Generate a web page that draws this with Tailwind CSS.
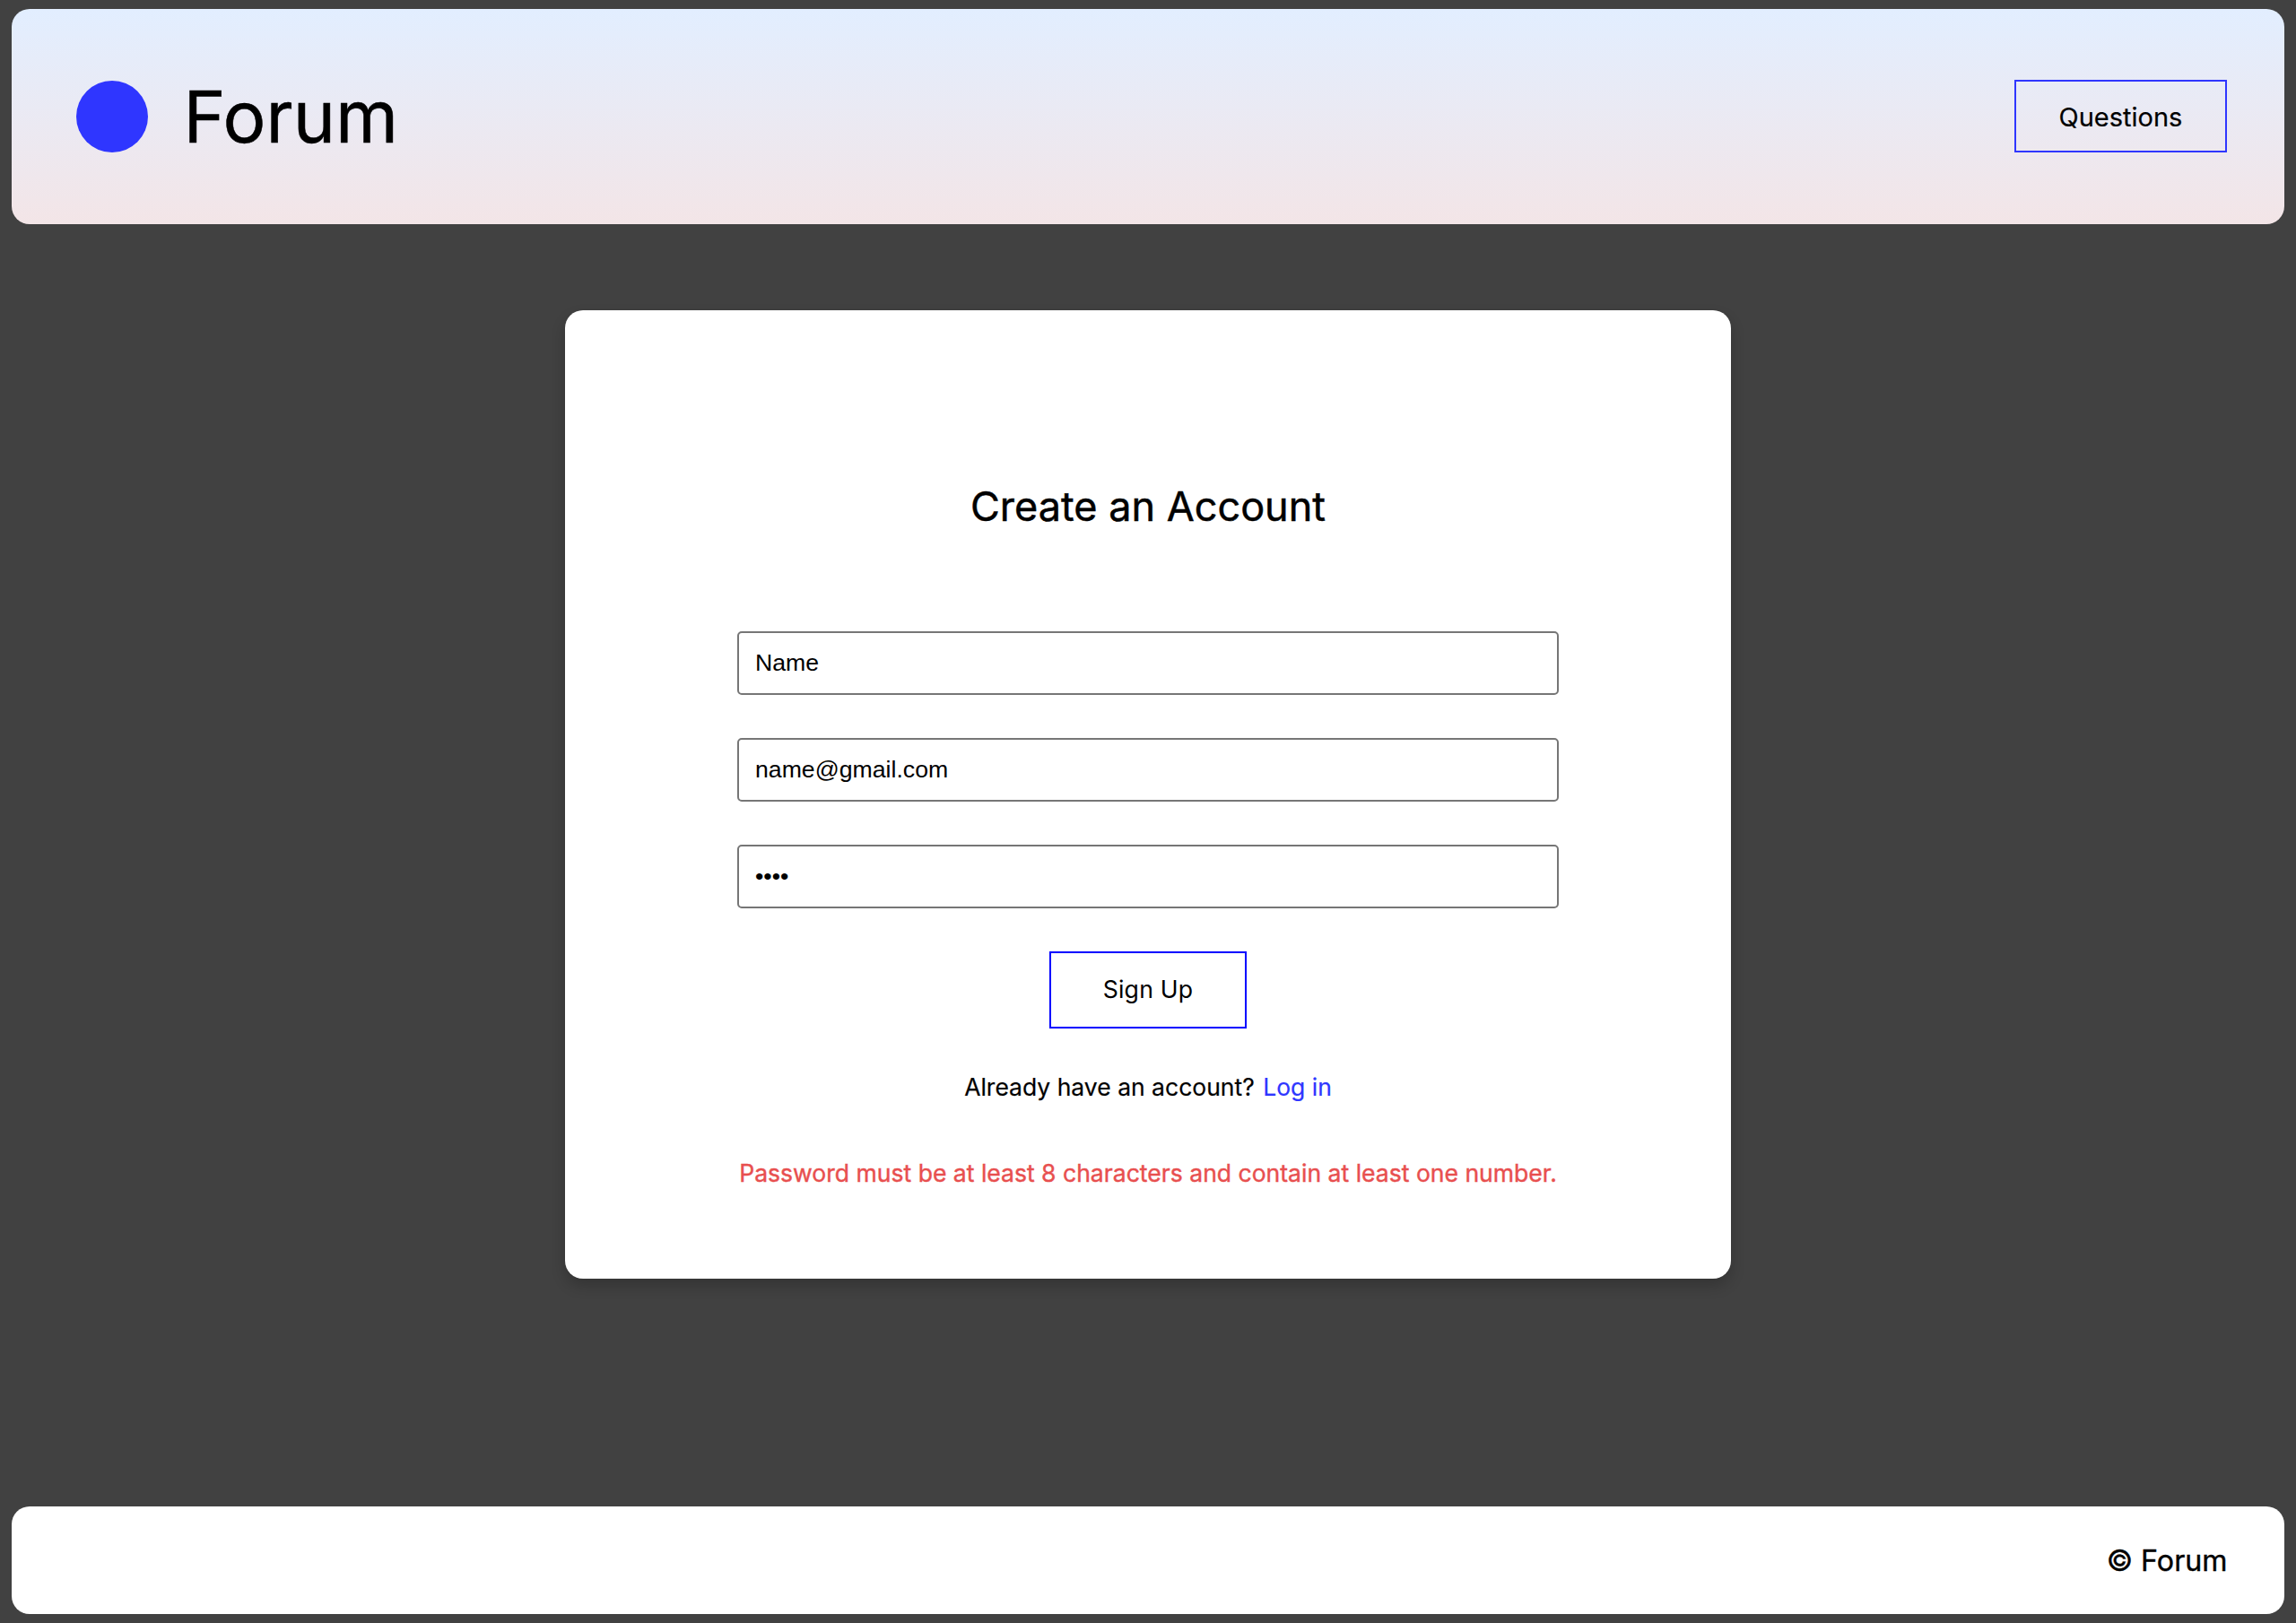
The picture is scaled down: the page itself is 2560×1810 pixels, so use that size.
<!DOCTYPE html>
<html lang="en">
<head>
<meta charset="utf-8">
<title>Forum</title>
<script src="https://cdn.jsdelivr.net/npm/@tailwindcss/browser@4"></script>
</head>
<body class="bg-[#414141] text-black font-['Inter',sans-serif]">
<div class="flex h-[1810px] w-[2560px] flex-col px-[13px] py-[10px]">
  <header class="flex h-60 shrink-0 items-center justify-between rounded-[20px] bg-linear-to-b/srgb from-[#e2eeff] to-[#f3e5e7] pl-[72px] pr-16">
    <div class="flex items-center gap-[39.5px]">
      <div class="size-20 rounded-full bg-[#2f36ff]"></div>
      <h1 class="text-[80px] leading-none [-webkit-text-stroke:0.5px_black]">Forum</h1>
    </div>
    <a href="#" class="mb-px flex h-[81px] w-[237px] items-center justify-center border-2 border-[#2f36ff] pt-0.5 text-[29px] [-webkit-text-stroke:0.2px_black]">Questions</a>
  </header>
  <main class="mt-24 flex h-[1080px] w-[1300px] shrink-0 flex-col items-center self-center rounded-[20px] bg-white px-48 shadow-[0_8px_16px_rgba(0,0,0,0.2)]">
    <h2 class="mt-[189px] h-[60px] text-[45px] leading-[60px] [-webkit-text-stroke:0.5px_black]">Create an Account</h2>
    <form class="mt-[109px] flex w-full flex-col items-center gap-12">
      <input type="text" value="Name" class="h-[71px] w-full rounded-[5px] border-2 border-[#767676] px-[18px] font-['Liberation_Sans',sans-serif] text-[26.67px]">
      <input type="text" value="name@gmail.com" class="h-[71px] w-full rounded-[5px] border-2 border-[#767676] px-[18px] font-['Liberation_Sans',sans-serif] text-[26.67px]">
      <input type="password" value="pass" class="h-[71px] w-full rounded-[5px] border-2 border-[#767676] px-[18px] font-['Liberation_Sans',sans-serif] text-[26.67px]">
      <button type="button" class="h-[86px] w-[220px] border-2 border-[#0000ff] pb-0.5 text-[26.67px] tracking-[0.2px]">Sign Up</button>
    </form>
    <p class="mt-[45px] h-10 text-[26.5px] leading-10 whitespace-nowrap [-webkit-text-stroke:0.2px]">Already have an account? <a href="#" class="ml-0.5 text-[#2f36ff]">Log in</a></p>
    <p class="mt-14 h-10 text-[26.56px] leading-10 whitespace-nowrap text-[#e84f4f] [-webkit-text-stroke:0.4px]">Password must be at least 8 characters and contain at least one number.</p>
  </main>
  <footer class="mt-auto flex h-[120px] shrink-0 items-center justify-end rounded-[20px] bg-white pt-0.5 pr-[63.5px] text-[32.2px] [-webkit-text-stroke:0.4px_black]">© Forum</footer>
</div>
</body>
</html>
